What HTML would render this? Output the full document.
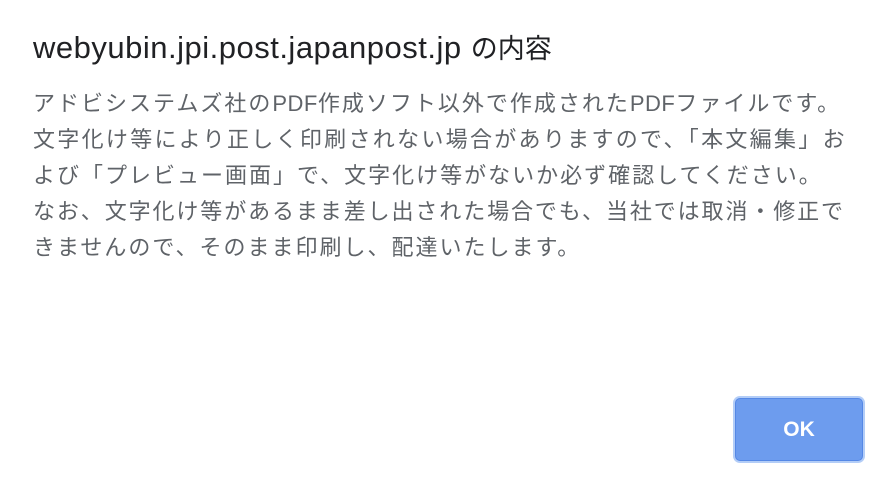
<!DOCTYPE html>
<html><head><meta charset="utf-8"><style>
html,body{margin:0;padding:0;background:#fff;width:886px;height:484px;overflow:hidden}
.t{position:absolute;left:33px;top:27px;font:31px "Liberation Sans","Noto Sans CJK JP",sans-serif;color:#202124;white-space:nowrap;letter-spacing:0.5px}
.t span{font-size:27px;letter-spacing:0}
.b{position:absolute;left:33px;top:86px;font:22px/36px "Liberation Sans","Noto Sans CJK JP",sans-serif;color:#5f6368;letter-spacing:2px;white-space:nowrap}
.b span{letter-spacing:0.5px}
.l2{letter-spacing:2.3px}
.l4{letter-spacing:1.9px}
.ok{position:absolute;left:735px;top:398px;width:128px;height:63px;box-sizing:border-box;background:#6d9cee;border:1px solid #5588e6;border-radius:5px;box-shadow:0 0 0 2px #b3cdf7;color:#fff;font:bold 21px/61px "Liberation Sans",sans-serif;text-align:center}
</style></head><body>
<div class="t">webyubin.jpi.post.japanpost.jp <span>の内容</span></div>
<div class="b">アドビシステムズ社の<span>PDF</span>作成ソフト以外で作成された<span>PDF</span>ファイルです。<br><i class="l2" style="font-style:normal">文字化け等により正しく印刷されない場合がありますので、「本文編集」お</i><br>よび「プレビュー画面」で、文字化け等がないか必ず確認してください。<br><i class="l4" style="font-style:normal">なお、文字化け等があるまま差し出された場合でも、当社では取消・修正で</i><br>きませんので、そのまま印刷し、配達いたします。</div>
<div class="ok">OK</div>
</body></html>
